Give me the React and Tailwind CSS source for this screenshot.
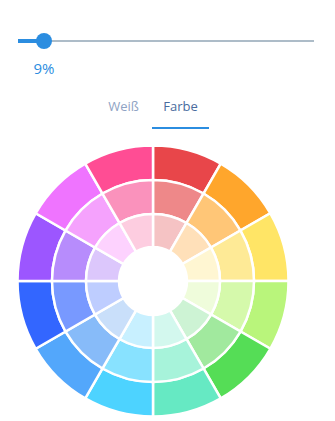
import React from 'react'

const outer = ['#e8464a', '#ffa62c', '#ffe566', '#b9f57b', '#55dd56', '#66e9c3', '#4dd3ff', '#53a7fb', '#3366ff', '#9c56ff', '#ef74ff', '#ff4d94']
const middle = ['#ee8889', '#ffc677', '#feea96', '#d5f9ab', '#a1e99e', '#a7f3da', '#88e2ff', '#87bbf9', '#7899ff', '#b78cfc', '#f5a2fd', '#fa92bc']
const inner = ['#f5c3c4', '#ffe0b9', '#fff6d2', '#effcdb', '#cdf3d4', '#d3f8ee', '#c8f0ff', '#c9dffa', '#becdff', '#dcc7fc', '#fdd2fe', '#fdcde0']

const CX = 135
const CY = 135

const pt = (r, deg) => {
  const a = (deg * Math.PI) / 180
  return [CX + r * Math.sin(a), CY - r * Math.cos(a)]
}

// annular sector, angles clockwise from 12 o'clock
const sector = (r0, r1, a0, a1) => {
  const [x1, y1] = pt(r1, a0)
  const [x2, y2] = pt(r1, a1)
  const [x3, y3] = pt(r0, a1)
  const [x4, y4] = pt(r0, a0)
  return `M${x1} ${y1} A${r1} ${r1} 0 0 1 ${x2} ${y2} L${x3} ${y3} A${r0} ${r0} 0 0 0 ${x4} ${y4} Z`
}

const rings = [
  { colors: outer, r0: 101, r1: 135.5 },
  { colors: middle, r0: 67, r1: 101 },
  { colors: inner, r0: 34, r1: 67 },
]

const ColorWheel = () => (
  <svg width="270" height="270" viewBox="0 0 270 270">
    {rings.map((ring, ri) =>
      ring.colors.map((c, i) => (
        <path
          key={`${ri}-${i}`}
          d={sector(ring.r0, ring.r1, i * 30, (i + 1) * 30)}
          fill={c}
          stroke="#ffffff"
          strokeWidth="2.5"
        />
      ))
    )}
  </svg>
)

export default function App() {
  return (
    <div className="w-[335px] h-[421px] bg-white flex flex-col font-['Open_Sans',sans-serif] overflow-hidden">
      {/* Slider */}
      <div className="relative mt-[33px] ml-[18px] w-[296px] h-4">
        <div className="absolute left-0 right-0 top-[7px] h-[2px] bg-[#adbcc8]" />
        <div className="absolute left-0 top-[6px] w-[26px] h-1 bg-[#2b8de0]" />
        <div className="absolute left-[18px] top-0 w-4 h-4 rounded-full bg-[#2b8de0]" />
      </div>
      <div className="mt-[9px] ml-[24px] w-10 text-center text-[15px] leading-5 text-[#2b8de0]">9%</div>

      {/* Tabs */}
      <div className="mt-[19px] ml-[95px] flex">
        <button className="w-[57px] pb-3 border-b-2 border-transparent text-[13px] leading-[18px] text-[#8fa3c4]">Weiß</button>
        <button className="w-[57px] pb-3 border-b-2 border-[#2b8de0] text-[13px] leading-[18px] text-[#4a6c9e]">Farbe</button>
      </div>

      {/* Wheel */}
      <div className="mt-[17px] ml-[18px]">
        <ColorWheel />
      </div>
    </div>
  )
}
